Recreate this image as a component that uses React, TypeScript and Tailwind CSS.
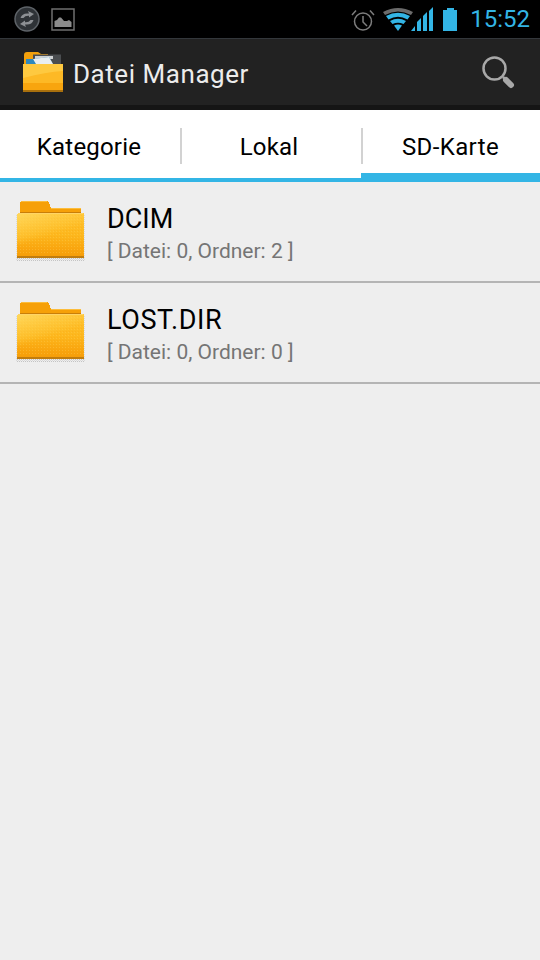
import React from "react";

function Folder({ id, className }: { id: string; className: string }) {
  return (
    <svg viewBox="0 0 70 62" className={className} shapeRendering="crispEdges">
      <defs>
        <linearGradient id={id + "f"} x1="0" y1="0" x2="0" y2="1">
          <stop offset="0" stopColor="#ffc22e" />
          <stop offset="0.5" stopColor="#fdb71d" />
          <stop offset="0.8" stopColor="#f9a50e" />
          <stop offset="1" stopColor="#f59c08" />
        </linearGradient>
        <linearGradient id={id + "h"} x1="0" y1="0" x2="0.5" y2="1">
          <stop offset="0" stopColor="#ffdb63" stopOpacity="0.9" />
          <stop offset="0.45" stopColor="#ffd04a" stopOpacity="0.35" />
          <stop offset="0.6" stopColor="#ffd04a" stopOpacity="0" />
        </linearGradient>
        <pattern id={id + "d"} width="3" height="3" patternUnits="userSpaceOnUse">
          <rect x="0" y="0" width="1" height="1" fill="#f9a20d" />
          <rect x="2" y="1" width="1" height="1" fill="#ffd564" />
        </pattern>
        <pattern id={id + "s"} width="2" height="2" patternUnits="userSpaceOnUse">
          <rect x="0" y="0" width="1" height="1" fill="#c4c4c4" />
          <rect x="1" y="1" width="1" height="1" fill="#dadada" />
        </pattern>
      </defs>
      <rect x="1" y="14" width="69" height="47" fill={`url(#${id}s)`} />
      <path d="M5 3 L6 1 H32 L34 3 L36 8 H66 V16 H5 Z" fill="#f6a008" />
      <path d="M6 1.500 H32 M36 8.500 H66" stroke="#fcbd3c" strokeWidth="1" fill="none" />
      <rect x="5" y="12" width="61" height="2" fill="#c97f08" />
      <path d="M3 13 H68 L69 14 V58 H2 V14 Z" fill={`url(#${id}f)`} />
      <path d="M2 14 H69 V54 H2 Z" fill={`url(#${id}d)`} opacity="0.3" />
      <path d="M3 13 H68 L69 14 V58 H2 V14 Z" fill={`url(#${id}h)`} />
      <rect x="2" y="56" width="67" height="2" fill="#c17d0e" />
      <rect x="3" y="13" width="65" height="1" fill="#ffd466" />
    </svg>
  );
}

function AppIcon() {
  return (
    <svg viewBox="0 0 42 42" className="w-[42px] h-[42px]">
      <path d="M2 4 Q2 1 5 1 H16 L19 3 H26 V14 H2 Z" fill="#f2a00c" />
      <rect x="11" y="3.500" width="28" height="11" fill="#4a4d50" />
      <rect x="13" y="5" width="18" height="3" fill="#cfd2d4" />
      <path d="M4 8 H12 L27 6 L31 13 H4 Z" fill="#2f88bd" />
      <path d="M11 8 L27 6 L31 13 L14 13 Z" fill="#e9eef0" />
      <path d="M1 13 H41 V40 Q41 41 40 41 H2 Q1 41 1 40 Z" fill="#fdb925" />
      <path d="M1 13 H41 V20 Q24 21 1 27 Z" fill="#ffd454" opacity="0.6" />
      <rect x="1" y="32" width="40" height="7" fill="#f8a50e" />
      <rect x="1" y="39" width="40" height="2" fill="#a9700d" />
    </svg>
  );
}

export default function App() {
  return (
    <div className="w-[540px] h-[960px] flex flex-col bg-[#eeeeee] overflow-hidden font-['Roboto',sans-serif]">
      <div className="h-[38px] shrink-0 bg-black flex items-center pl-[14px] pr-[10px]">
        <svg viewBox="0 0 26 26" className="w-[26px] h-[26px] mr-[11px]">
          <circle cx="13" cy="13" r="12" fill="#2e3236" stroke="#5e6368" strokeWidth="1.500" />
          <path d="M6.500 12 Q8 7.500 13 7.500 L15 7.500 L14 5 L20 8 L15 11.500 L15 9.800 Q11 9.500 9.500 12 Z" fill="#8d9094" />
          <path d="M19.500 14 Q18 18.500 13 18.500 L11 18.500 L12 21 L6 18 L11 14.500 L11 16.200 Q15 16.500 16.500 14 Z" fill="#8d9094" />
        </svg>
        <svg viewBox="0 0 24 23" className="w-[24px] h-[23px]">
          <rect x="1" y="1" width="22" height="21" fill="none" stroke="#6f6f6f" strokeWidth="1.500" />
          <path d="M3.500 19 V13 L6 12 L8 9.500 L10 9.500 L13 13 L16 13 L18 12 L20.500 14 V19 Z" fill="#8c8c8c" />
        </svg>
        <div className="flex-1" />
        <svg viewBox="0 0 24 22" className="w-[24px] h-[22px] mr-[8px] mt-[2px]">
          <circle cx="12" cy="12.500" r="8.500" fill="none" stroke="#7d7d7d" strokeWidth="1.500" />
          <path d="M12 7 V13 L16 17" fill="none" stroke="#7d7d7d" strokeWidth="1.500" />
          <path d="M1 6 L5 1.500 M23 6 L19 1.500" stroke="#7d7d7d" strokeWidth="1.500" />
        </svg>
        <svg viewBox="0 0 50 24" className="w-[50px] h-[24px] mr-[10px]">
          <path d="M0 5 Q15 -3 30 5 L28 8 Q15 1 2 8 Z" fill="#6b6b6b" />
          <path d="M3 9 Q15 2.500 27 9 L24.500 12.500 Q15 7 5.500 12.500 Z" fill="#33b5e5" />
          <path d="M7 14 Q15 9.500 23 14 L20.500 17 Q15 14.500 9.500 17 Z" fill="#33b5e5" />
          <path d="M11 18.500 Q15 16.500 19 18.500 L15 24 Z" fill="#33b5e5" />
          <path d="M28 24 L32 19 V24 Z M34 24 V15 L38 11 V24 Z M40 24 V9 L44 5 V24 Z M46 24 V4 L50 0 V24 Z" fill="#33b5e5" />
        </svg>
        <div className="w-[14px] h-[23px] mr-[13px] flex flex-col items-center">
          <div className="w-[7px] h-[2px] bg-[#33b5e5]" />
          <div className="w-[14px] flex-1 bg-[#33b5e5]" />
        </div>
        <span className="text-[24px] leading-none text-[#33b5e5]">15:52</span>
      </div>

      <div className="h-[72px] shrink-0 flex items-center bg-[#222222] border-t border-[#33373b] border-b-[5px] border-b-[#151515] pl-[22px] pr-[25px]">
        <AppIcon />
        <span className="ml-[9px] mt-[3px] text-[26px] tracking-[0.55px] leading-none text-[#ececec] flex-1">Datei Manager</span>
        <svg viewBox="0 0 34 34" className="w-[34px] h-[34px]">
          <circle cx="13.500" cy="13.500" r="11" fill="none" stroke="#a8a8a8" strokeWidth="2.500" />
          <path d="M22 22 L25 25" stroke="#a8a8a8" strokeWidth="2.500" />
          <path d="M25 25 L30 30" stroke="#a8a8a8" strokeWidth="6" strokeLinecap="round" />
        </svg>
      </div>

      <div className="h-[72px] shrink-0 grid grid-cols-[181px_180px_179px] bg-white">
        <div className="flex items-center justify-center border-b-4 border-[#33b5e5] pt-[6px] pr-[3px] text-[24px] tracking-[0.2px] leading-none text-black relative">
          Kategorie
          <div className="absolute right-[-1px] top-[18px] h-[36px] w-[2px] bg-[#d2d2d2]" />
        </div>
        <div className="flex items-center justify-center border-b-4 border-[#33b5e5] pt-[6px] pr-[4px] text-[24px] tracking-[0.2px] leading-none text-black relative">
          Lokal
          <div className="absolute right-[-2px] top-[18px] h-[36px] w-[2px] bg-[#d2d2d2] z-10" />
        </div>
        <div className="flex items-center justify-center border-b-[9px] border-[#33b5e5] pt-[11px] text-[24px] tracking-[0.4px] leading-none text-black">
          SD-Karte
        </div>
      </div>

      <div className="h-[101px] shrink-0 flex items-center border-b-2 border-[#b4b4b4] pl-[15px]">
        <Folder id="a" className="w-[70px] h-[62px] mt-[-2px]" />
        <div className="ml-[22px] flex flex-col mt-[3px]">
          <span className="text-[27px] leading-[32px] text-black">DCIM</span>
          <span className="text-[21px] leading-[26px] text-[#757575] mt-[3px]">[ Datei: 0, Ordner: 2 ]</span>
        </div>
      </div>
      <div className="h-[101px] shrink-0 flex items-center border-b-2 border-[#b4b4b4] pl-[15px]">
        <Folder id="b" className="w-[70px] h-[62px] mt-[-2px]" />
        <div className="ml-[22px] flex flex-col mt-[3px]">
          <span className="text-[27px] tracking-[0.6px] leading-[32px] text-black">LOST.DIR</span>
          <span className="text-[21px] leading-[26px] text-[#757575] mt-[3px]">[ Datei: 0, Ordner: 0 ]</span>
        </div>
      </div>
    </div>
  );
}
